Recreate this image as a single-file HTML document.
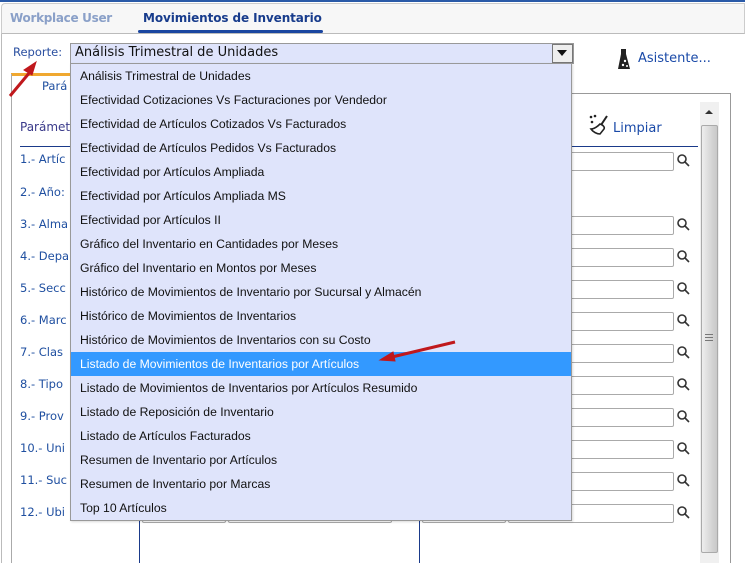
<!DOCTYPE html>
<html><head><meta charset="utf-8"><style>
*{margin:0;padding:0;box-sizing:border-box}
body{width:745px;height:563px;overflow:hidden;background:#fff;position:relative;font-family:"Liberation Sans",sans-serif}
.a{position:absolute}
.lbl{position:absolute;left:20px;font:11.5px "DejaVu Sans",sans-serif;color:#1f4fa0}
.in{position:absolute;height:19px;border:1px solid #aaa;border-radius:2px;background:#fff}
.mi{position:absolute;left:0;width:500px;height:24px;line-height:24px;padding-left:9px;font-size:12.2px;color:#111}
</style></head><body>
<div class="a" style="left:0;top:0;width:745px;height:2px;background:#2a5aa8"></div>
<div class="a" style="left:1px;top:3px;width:744px;height:31px;background:#f7f7f7;border:1px solid #ccc;border-bottom:1px solid #bbb;border-radius:4px 0 0 0"></div>
<div class="a" style="left:10px;top:11px;font:bold 12px 'DejaVu Sans',sans-serif;color:#8aa0c8;letter-spacing:-0.3px">Workplace User</div>
<div class="a" style="left:143px;top:11px;font:bold 12px 'DejaVu Sans',sans-serif;color:#183c8c;letter-spacing:-0.1px">Movimientos de Inventario</div>
<div class="a" style="left:138px;top:30px;width:185px;height:3px;background:#1a46a0;border-radius:2px"></div>
<div class="a" style="left:1px;top:34px;width:1px;height:529px;background:#bbb"></div>

<div class="a" style="left:13px;top:45px;font:11.5px 'DejaVu Sans',sans-serif;color:#2a4fa0">Reporte:</div>
<div class="a" style="left:70px;top:43px;width:504px;height:21px;background:#dfe4fb;border:1px solid #999"></div>
<div class="a" style="left:75px;top:45px;font:13px 'DejaVu Sans',sans-serif;color:#111">Análisis Trimestral de Unidades</div>
<div class="a" style="left:552px;top:44px;width:21px;height:19px;background:#eee;border:1px solid #777"></div>
<div class="a" style="left:557px;top:50px;width:0;height:0;border-left:5px solid transparent;border-right:5px solid transparent;border-top:6px solid #111"></div>

<svg class="a" style="left:617px;top:48px" width="14" height="22"><path d="M4 1h5v5l4 15H1l3-15z" fill="#222"/><circle cx="8" cy="13" r="1.2" fill="#fff"/><circle cx="6" cy="17" r="1.2" fill="#fff"/><circle cx="10" cy="18" r="1" fill="#fff"/></svg>
<div class="a" style="left:638px;top:51px;font:13px 'DejaVu Sans',sans-serif;color:#1a4aa8">Asistente...</div>

<div class="a" style="left:11px;top:73px;width:60px;height:3px;background:#f0a830"></div>
<div class="a" style="left:11px;top:74px;width:1px;height:489px;background:#aaa"></div>
<div class="a" style="left:42px;top:79px;font:11.5px 'DejaVu Sans',sans-serif;color:#1f4fa0">Pará</div>
<div class="a" style="left:20px;top:120px;font:12px 'DejaVu Sans',sans-serif;color:#3a3a8a">Parámet</div>
<div class="a" style="left:571px;top:93px;width:160px;height:470px;border-top:1px solid #999;border-right:1px solid #999"></div>
<div class="a" style="left:20px;top:146px;width:678px;height:1px;background:#1a3a8a"></div>
<svg class="a" style="left:588px;top:114px" width="22" height="22"><circle cx="3" cy="3" r="1.3" fill="#222"/><circle cx="7" cy="2" r="1.3" fill="#222"/><circle cx="4" cy="8" r="1.3" fill="#222"/><path d="M19 2l-6 9" stroke="#222" stroke-width="2"/><path d="M12 10c3 1 5 3 4 5l-4 5c-3 0-7-2-9-5 3 0 6-2 9-5z" fill="none" stroke="#222" stroke-width="1.6"/></svg>
<div class="a" style="left:613px;top:121px;font:13px 'DejaVu Sans',sans-serif;color:#1a4aa8">Limpiar</div>
<div class="a" style="left:700px;top:102px;width:19px;height:461px;background:#f0f0f0"></div>
<div class="a" style="left:705px;top:110px;width:0;height:0;border-left:4px solid transparent;border-right:4px solid transparent;border-bottom:4px solid #333"></div>
<div class="a" style="left:701px;top:125px;width:17px;height:428px;background:linear-gradient(90deg,#eee,#d6d6d6 60%,#c8c8c8);border:1px solid #aaa;border-radius:2px"></div>
<div class="a" style="left:705px;top:334px;width:8px;height:7px;border-top:1px solid #777;border-bottom:1px solid #777"></div>
<div class="a" style="left:705px;top:337px;width:8px;height:1px;background:#777"></div>

<div class="lbl" style="top:152px">1.- Artíc</div>
<div class="lbl" style="top:185px">2.- Año:</div>
<div class="lbl" style="top:217px">3.- Alma</div>
<div class="lbl" style="top:249px">4.- Depa</div>
<div class="lbl" style="top:281px">5.- Secc</div>
<div class="lbl" style="top:313px">6.- Marc</div>
<div class="lbl" style="top:345px">7.- Clas</div>
<div class="lbl" style="top:377px">8.- Tipo</div>
<div class="lbl" style="top:409px">9.- Prov</div>
<div class="lbl" style="top:441px">10.- Uni</div>
<div class="lbl" style="top:473px">11.- Suc</div>
<div class="lbl" style="top:505px">12.- Ubi</div>

<div class="in" style="left:508px;top:152px;width:166px"></div>
<div class="in" style="left:508px;top:216px;width:166px"></div>
<div class="in" style="left:508px;top:248px;width:166px"></div>
<div class="in" style="left:508px;top:280px;width:166px"></div>
<div class="in" style="left:508px;top:312px;width:166px"></div>
<div class="in" style="left:508px;top:344px;width:166px"></div>
<div class="in" style="left:508px;top:376px;width:166px"></div>
<div class="in" style="left:508px;top:408px;width:166px"></div>
<div class="in" style="left:508px;top:440px;width:166px"></div>
<div class="in" style="left:508px;top:472px;width:166px"></div>
<div class="in" style="left:508px;top:504px;width:166px"></div>
<div class="in" style="left:142px;top:504px;width:84px"></div>
<div class="in" style="left:228px;top:504px;width:164px"></div>
<div class="in" style="left:422px;top:504px;width:84px"></div>
<div class="a" style="left:139px;top:520px;width:1px;height:43px;background:#1a3a8a"></div>
<div class="a" style="left:419px;top:520px;width:1px;height:43px;background:#1a3a8a"></div>

<svg class="a" style="left:676px;top:152px" width="16" height="370">
<g fill="none" stroke="#333" stroke-width="1.6">
<g id="m"><circle cx="6" cy="7" r="4"/><path d="M9 10l4 4"/></g>
<use href="#m" y="64"/><use href="#m" y="96"/><use href="#m" y="128"/><use href="#m" y="160"/><use href="#m" y="192"/><use href="#m" y="224"/><use href="#m" y="256"/><use href="#m" y="288"/><use href="#m" y="320"/><use href="#m" y="352"/>
</g></svg>

<div class="a" style="left:70px;top:63px;width:502px;height:458px;background:#dfe4fb;border:1px solid #999;box-shadow:1px 1px 2px rgba(0,0,0,.15)">
<div class="mi" style="top:0">Análisis Trimestral de Unidades</div>
<div class="mi" style="top:24px">Efectividad Cotizaciones Vs Facturaciones por Vendedor</div>
<div class="mi" style="top:48px">Efectividad de Artículos Cotizados Vs Facturados</div>
<div class="mi" style="top:72px">Efectividad de Artículos Pedidos Vs Facturados</div>
<div class="mi" style="top:96px">Efectividad por Artículos Ampliada</div>
<div class="mi" style="top:120px">Efectividad por Artículos Ampliada MS</div>
<div class="mi" style="top:144px">Efectividad por Artículos II</div>
<div class="mi" style="top:168px">Gráfico del Inventario en Cantidades por Meses</div>
<div class="mi" style="top:192px">Gráfico del Inventario en Montos por Meses</div>
<div class="mi" style="top:216px">Histórico de Movimientos de Inventario por Sucursal y Almacén</div>
<div class="mi" style="top:240px">Histórico de Movimientos de Inventarios</div>
<div class="mi" style="top:264px">Histórico de Movimientos de Inventarios con su Costo</div>
<div class="mi" style="top:288px;background:#3399ff;color:#fff">Listado de Movimientos de Inventarios por Artículos</div>
<div class="mi" style="top:312px">Listado de Movimientos de Inventarios por Artículos Resumido</div>
<div class="mi" style="top:336px">Listado de Reposición de Inventario</div>
<div class="mi" style="top:360px">Listado de Artículos Facturados</div>
<div class="mi" style="top:384px">Resumen de Inventario por Artículos</div>
<div class="mi" style="top:408px">Resumen de Inventario por Marcas</div>
<div class="mi" style="top:432px">Top 10 Artículos</div>
</div>

<svg class="a" style="left:0;top:0" width="745" height="563">
<g fill="#c0181c" stroke="#c0181c">
<path d="M10 96L30 72" stroke-width="3"/>
<path d="M36 62l-12 8 8 5z" stroke-width="1"/>
<path d="M455 342L392 357" stroke-width="3"/>
<path d="M380 360l13-8 2 9z" stroke-width="1"/>
</g></svg>
</body></html>
